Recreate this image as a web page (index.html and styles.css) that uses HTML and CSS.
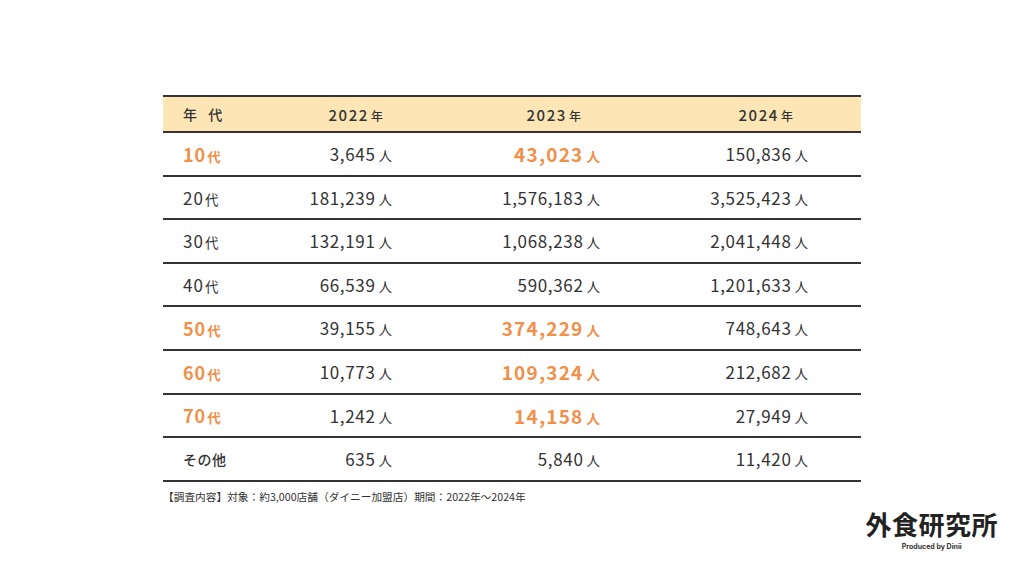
FILE: index.html
```html
<!DOCTYPE html>
<html lang="ja">
<head>
<meta charset="utf-8">
<link rel="stylesheet" href="styles.css">
</head>
<body>
<div class="page">
  <div class="table">
    <div class="row head">
      <div class="cell label">年&nbsp;代</div>
      <div class="cell c2">2022<span class="u">年</span></div>
      <div class="cell c3">2023<span class="u">年</span></div>
      <div class="cell c4">2024<span class="u">年</span></div>
    </div>
    <div class="row">
      <div class="cell label hl"><span class="n">10</span><span class="u">代</span></div>
      <div class="cell">3,645<span class="u">人</span></div>
      <div class="cell hl">43,023<span class="u">人</span></div>
      <div class="cell">150,836<span class="u">人</span></div>
    </div>
    <div class="row">
      <div class="cell label"><span class="n">20</span><span class="u">代</span></div>
      <div class="cell">181,239<span class="u">人</span></div>
      <div class="cell">1,576,183<span class="u">人</span></div>
      <div class="cell">3,525,423<span class="u">人</span></div>
    </div>
    <div class="row">
      <div class="cell label"><span class="n">30</span><span class="u">代</span></div>
      <div class="cell">132,191<span class="u">人</span></div>
      <div class="cell">1,068,238<span class="u">人</span></div>
      <div class="cell">2,041,448<span class="u">人</span></div>
    </div>
    <div class="row">
      <div class="cell label"><span class="n">40</span><span class="u">代</span></div>
      <div class="cell">66,539<span class="u">人</span></div>
      <div class="cell">590,362<span class="u">人</span></div>
      <div class="cell">1,201,633<span class="u">人</span></div>
    </div>
    <div class="row">
      <div class="cell label hl"><span class="n">50</span><span class="u">代</span></div>
      <div class="cell">39,155<span class="u">人</span></div>
      <div class="cell hl">374,229<span class="u">人</span></div>
      <div class="cell">748,643<span class="u">人</span></div>
    </div>
    <div class="row">
      <div class="cell label hl"><span class="n">60</span><span class="u">代</span></div>
      <div class="cell">10,773<span class="u">人</span></div>
      <div class="cell hl">109,324<span class="u">人</span></div>
      <div class="cell">212,682<span class="u">人</span></div>
    </div>
    <div class="row">
      <div class="cell label hl"><span class="n">70</span><span class="u">代</span></div>
      <div class="cell">1,242<span class="u">人</span></div>
      <div class="cell hl">14,158<span class="u">人</span></div>
      <div class="cell">27,949<span class="u">人</span></div>
    </div>
    <div class="row">
      <div class="cell label other">その他</div>
      <div class="cell">635<span class="u">人</span></div>
      <div class="cell">5,840<span class="u">人</span></div>
      <div class="cell">11,420<span class="u">人</span></div>
    </div>
  </div>
  <p class="note">【調査内容】対象：約3,000店舗（ダイニー加盟店）期間：2022年～2024年</p>
  <div class="logo">
    <div class="logo-main">外食研究所</div>
    <div class="logo-sub">Produced by Dinii</div>
  </div>
</div>
</body>
</html>
```

FILE: styles.css
```css
html, body {
  margin: 0;
  padding: 0;
  background: #ffffff;
}
body {
  font-family: "Noto Sans CJK JP", "Noto Sans", sans-serif;
  color: #333333;
  width: 1024px;
  height: 576px;
  overflow: hidden;
}
.page {
  display: flex;
  flex-direction: column;
  padding-top: 95px;
}
.table {
  margin-left: 163px;
  width: 698px;
  border-top: 2px solid #333333;
}
.row {
  display: grid;
  grid-template-columns: 74px 208px 208px 208px;
  height: 41.6px;
  border-bottom: 2px solid #333333;
  align-items: center;
}
.row.head {
  height: 34px;
  background: #fde5b6;
}
.cell {
  text-align: right;
  padding-right: 53px;
  font-size: 17px;
  line-height: 1;
  white-space: nowrap;
  letter-spacing: 0.65px;
}
.cell .u {
  font-size: 13.5px;
  margin-left: 3px;
  letter-spacing: 0;
}
.cell.hl {
  color: #f0904a;
  font-weight: 700;
  font-size: 19px;
  letter-spacing: 1.2px;
}
.cell.label {
  text-align: left;
  padding-left: 20px;
  padding-right: 0;
  letter-spacing: 1px;
}
.cell.label .u {
  margin-left: 1px;
}
.cell.label.hl {
  font-size: 18px;
}
.cell.other {
  font-size: 14px;
  font-weight: 500;
  letter-spacing: 0.5px;
}
.head .cell {
  font-size: 15px;
  font-weight: 500;
  letter-spacing: 1.6px;
}
.head .cell .u {
  font-size: 12px;
  margin-left: 2px;
}
.head .label {
  letter-spacing: 4px;
  font-size: 14px;
}
.head .c2 { padding-right: 62px; }
.head .c3 { padding-right: 72px; }
.head .c4 { padding-right: 68px; }
.note {
  margin: 8px 0 0 163px;
  font-size: 10.7px;
  color: #333333;
  line-height: 14px;
}
.logo {
  align-self: flex-end;
  margin-right: 26px;
  margin-top: 5px;
  display: flex;
  flex-direction: column;
  align-items: center;
}
.logo-main {
  font-size: 26px;
  font-weight: 700;
  line-height: 30px;
  color: #222222;
  letter-spacing: 0.5px;
}
.logo-sub {
  font-family: "Inter", "Noto Sans", sans-serif;
  font-size: 7px;
  font-weight: 700;
  color: #333333;
  margin-top: 3px;
}
```
